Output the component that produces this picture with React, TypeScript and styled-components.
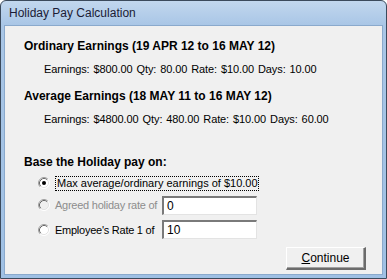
import React from "react";
import styled, { createGlobalStyle } from "styled-components";

const Global = createGlobalStyle`
  html, body { margin: 0; padding: 0; background: #ffffff; }
  body { font-family: "Liberation Sans", Arial, sans-serif; }
`;

const Window = styled.div`
  box-sizing: border-box;
  width: 387px;
  height: 279px;
  border: 1px solid #3b4a5c;
  border-radius: 6px 6px 0 0;
  background: linear-gradient(180deg, #c2d7ee 0px, #a9c6e6 24px, #9fc0e4 100%);
  display: flex;
  flex-direction: column;
  padding: 0 3px 3px 3px;
  overflow: hidden;
`;

const TitleBar = styled.div`
  height: 24px;
  display: flex;
  align-items: center;
  padding-left: 5px;
  font-size: 12px;
  color: #1b1b35;
  flex-shrink: 0;
`;

const Body = styled.div`
  flex: 1;
  background: #f0f0f0;
  border: 1px solid #8aa9cc;
  padding: 12px 10px 0 19px;
  display: flex;
  flex-direction: column;
  color: #000;
`;

const Heading = styled.div<{ $top?: number }>`
  font-weight: bold;
  font-size: 12px;
  line-height: 16px;
  margin-top: ${(p) => p.$top ?? 0}px;
`;

const Detail = styled.div`
  font-size: 11px;
  line-height: 16px;
  margin-top: 7px;
  padding-left: 20px;
  word-spacing: 1px;
  letter-spacing: -0.1px;
`;

const Options = styled.div`
  display: flex;
  flex-direction: column;
  padding-left: 14px;
  margin-top: 3px;
`;

const OptionRow = styled.div<{ $h: number; $disabled?: boolean }>`
  display: flex;
  align-items: center;
  height: ${(p) => p.$h}px;
  font-size: 11px;
  white-space: nowrap;
  color: ${(p) => (p.$disabled ? "#8d8d8d" : "#000")};
`;

const RadioBox = styled.span`
  width: 12px;
  height: 12px;
  display: inline-flex;
  margin-right: 5px;
  flex-shrink: 0;
`;

const FocusLabel = styled.span`
  border: 1px dotted #000;
  padding: 0 0 0 1px;
  line-height: 13px;
`;

const Label = styled.span`
  width: 107px;
  flex-shrink: 0;
  letter-spacing: -0.25px;
`;

const TextBox = styled.div`
  box-sizing: border-box;
  width: 95px;
  height: 19px;
  border-style: solid;
  border-width: 2px 1px 1px 2px;
  border-color: #7a7a7a #e3e3e3 #e3e3e3 #7a7a7a;
  background: #fff;
  font-size: 12px;
  color: #000;
  padding-left: 3px;
  display: flex;
  align-items: center;
`;

const Footer = styled.div`
  display: flex;
  justify-content: flex-end;
  padding-right: 6px;
  margin-top: 5px;
`;

const Button = styled.div`
  box-sizing: border-box;
  width: 80px;
  height: 23px;
  background: #f0f0f0;
  border-style: solid;
  border-width: 1px 2px 2px 1px;
  border-color: #ffffff #6b6b6b #6b6b6b #ffffff;
  box-shadow: inset -1px -1px 0 #a0a0a0;
  font-size: 12px;
  display: flex;
  align-items: center;
  justify-content: center;
`;

function Radio({ checked, disabled }: { checked?: boolean; disabled?: boolean }) {
  const fill = disabled ? "#f0f0f0" : "#ffffff";
  return (
    <RadioBox>
      <svg width="12" height="12" viewBox="0 0 12 12">
        <circle cx="6" cy="6" r="5" fill={fill} />
        <path d="M2.11 9.89 A5.5 5.5 0 0 1 9.89 2.11" fill="none" stroke="#a0a0a0" strokeWidth="1" />
        <path d="M9.89 2.11 A5.5 5.5 0 0 1 2.11 9.89" fill="none" stroke="#ffffff" strokeWidth="1" />
        <path d="M2.82 9.18 A4.5 4.5 0 0 1 9.18 2.82" fill="none" stroke="#696969" strokeWidth="1" />
        <path d="M9.18 2.82 A4.5 4.5 0 0 1 2.82 9.18" fill="none" stroke="#e3e3e3" strokeWidth="1" />
        {checked && <circle cx="6" cy="6" r="2" fill="#000" />}
      </svg>
    </RadioBox>
  );
}

export default function App() {
  return (
    <>
      <Global />
      <Window>
        <TitleBar>Holiday Pay Calculation</TitleBar>
        <Body>
          <Heading>Ordinary Earnings (19 APR 12 to 16 MAY 12)</Heading>
          <Detail>Earnings: $800.00 Qty: 80.00 Rate: $10.00 Days: 10.00</Detail>
          <Heading $top={11}>Average Earnings (18 MAY 11 to 16 MAY 12)</Heading>
          <Detail>Earnings: $4800.00 Qty: 480.00 Rate: $10.00 Days: 60.00</Detail>
          <Heading $top={27}>Base the Holiday pay on:</Heading>
          <Options>
            <OptionRow $h={20}>
              <Radio checked />
              <FocusLabel>Max average/ordinary earnings of $10.00</FocusLabel>
            </OptionRow>
            <OptionRow $h={24} $disabled>
              <Radio disabled />
              <Label>Agreed holiday rate of</Label>
              <TextBox>0</TextBox>
            </OptionRow>
            <OptionRow $h={25}>
              <Radio />
              <Label>Employee's Rate 1 of</Label>
              <TextBox>10</TextBox>
            </OptionRow>
          </Options>
          <Footer>
            <Button>
              <span>
                <u>C</u>ontinue
              </span>
            </Button>
          </Footer>
        </Body>
      </Window>
    </>
  );
}
